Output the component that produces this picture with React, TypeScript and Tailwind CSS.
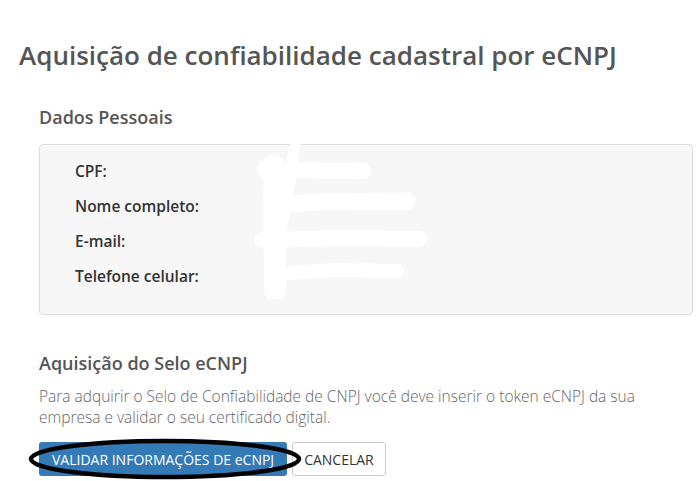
import React from 'react';

const rows = ['CPF:', 'Nome completo:', 'E-mail:', 'Telefone celular:'];

// white scribble that hides the personal data in the screenshot
function Redaction() {
    return (
        <svg
            className="absolute left-[215px] top-[-1px]"
            width="175"
            height="155"
            viewBox="0 0 175 155"
        >
            <g
                stroke="#ffffff"
                strokeLinecap="round"
                strokeLinejoin="round"
                fill="none"
            >
                <path d="M40 2 L34 30" strokeWidth="11" />
                <path d="M19 22 L20 146" strokeWidth="22" />
                <path d="M36 24 L24 90" strokeWidth="14" />
                <path d="M10 26 L108 27" strokeWidth="16" />
                <path d="M16 62 L60 58 L152 57" strokeWidth="17" />
                <path d="M7 96 L90 94 L164 95" strokeWidth="16" />
                <path d="M16 130 L80 126 L142 127" strokeWidth="14" />
            </g>
        </svg>
    );
}

export default function App() {
    return (
        <div className="w-[697px] h-[481px] overflow-hidden bg-white font-['Open_Sans',sans-serif] text-[#555]">
            <div className="pt-[38px] pl-[19px]">
                <h1 className="text-[26px] font-semibold leading-[34px]">
                    Aquisição de confiabilidade cadastral por eCNPJ
                </h1>
            </div>
            <div className="pl-[39px] pr-[4px]">
                <h2 className="mt-[33px] text-[18px] font-semibold leading-[24px]">
                    Dados Pessoais
                </h2>
                <div className="relative mt-[15px] h-[171px] rounded-[4px] border border-[#dddddd] bg-[#f7f7f7] pl-[35px] pt-[14px]">
                    <div className="flex flex-col gap-[11px]">
                        {rows.map((label) => (
                            <div
                                key={label}
                                className="text-[15.5px] font-semibold leading-[24px] text-[#333]"
                            >
                                {label}
                            </div>
                        ))}
                    </div>
                    <Redaction />
                </div>
                <h2 className="mt-[36px] text-[18px] font-semibold leading-[24px]">
                    Aquisição do Selo eCNPJ
                </h2>
                <p className="mt-[11px] pr-[40px] text-[15.5px] font-light leading-[21px] text-[#666]">
                    Para adquirir o Selo de Confiabilidade de CNPJ você deve
                    inserir o token eCNPJ da sua empresa e validar o seu
                    certificado digital.
                </p>
                <div className="mt-[14px] flex gap-[5px]">
                    <div className="relative">
                        <button className="h-[34px] rounded-[3px] bg-[#337ab7] px-[13px] text-[14px] text-white">
                            VALIDAR INFORMAÇÕES DE eCNPJ
                        </button>
                        <svg
                            className="pointer-events-none absolute left-[-12px] top-[-5px]"
                            width="276"
                            height="44"
                            viewBox="0 0 276 44"
                        >
                            <ellipse
                                cx="138"
                                cy="22"
                                rx="134"
                                ry="18"
                                fill="none"
                                stroke="#000"
                                strokeWidth="4.5"
                            />
                        </svg>
                    </div>
                    <button className="h-[34px] rounded-[3px] border border-[#cccccc] bg-white px-[11px] text-[14px] text-[#333]">
                        CANCELAR
                    </button>
                </div>
            </div>
        </div>
    );
}
